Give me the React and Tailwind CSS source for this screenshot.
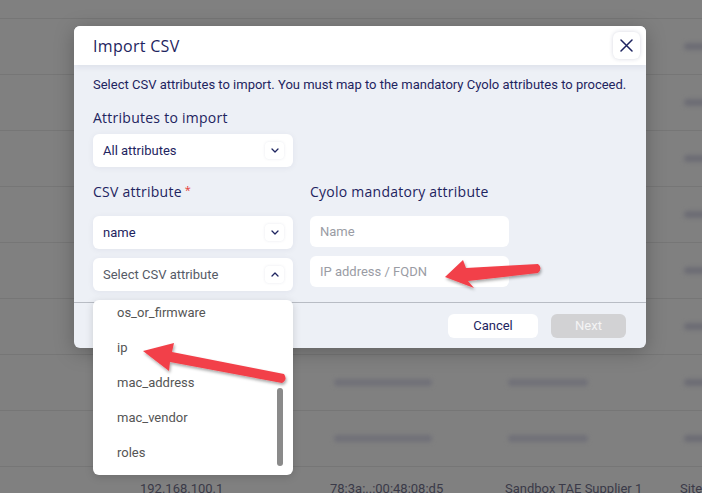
import React from 'react';

const label = { fontFamily: '"Open Sans", "Noto Sans", sans-serif' };
const roboto = { fontFamily: 'Roboto, "Noto Sans", sans-serif' };

function Chevron({ up }) {
  return (
    <span className="w-[19px] h-[17px] rounded bg-white shadow-[0_0_3px_rgba(30,40,90,0.10)] flex items-center justify-center">
      <svg width="8" height="5" viewBox="0 0 8 5" fill="none">
        <path d={up ? 'M1 4L4 1L7 4' : 'M1 1L4 4L7 1'} stroke="#1e2460" strokeWidth="1.3" strokeLinecap="round" strokeLinejoin="round" />
      </svg>
    </span>
  );
}

function Select({ value, placeholder, up }) {
  return (
    <div className="h-[33px] w-[200px] rounded-md bg-white shadow-[0_1px_6px_rgba(30,40,90,0.06)] flex items-center justify-between pl-[10px] pr-[9px]" style={roboto}>
      <span className={`text-[13px] ${value ? 'text-[#1e2460]' : 'text-[#555a66]'}`}>{value || placeholder}</span>
      <Chevron up={up} />
    </div>
  );
}

function Input({ placeholder }) {
  return (
    <div className="h-[31px] w-[199px] rounded-md bg-white flex items-center px-[10px]" style={roboto}>
      <span className="text-[13px] text-[#9a9ca4]">{placeholder}</span>
    </div>
  );
}

function Background() {
  const rows = Array.from({ length: 8 });
  return (
    <div className="absolute inset-0 bg-[#808080]">
      <div className="h-[19px] border-b border-[#767676]" />
      {rows.map((_, i) => (
        <div key={i} className="h-[56px] border-b border-[#767676] relative flex items-center">
          <div className="absolute left-[684px] w-[40px] h-[7px] rounded bg-[#6c6c74] blur-[2px]" />
          {i >= 6 && (
            <>
              <div className="absolute left-[334px] w-[98px] h-[7px] rounded bg-[#707078] blur-[2px]" />
              <div className="absolute left-[508px] w-[80px] h-[7px] rounded bg-[#707078] blur-[2px]" />
            </>
          )}
        </div>
      ))}
      <div className="relative h-[30px] text-[13px] text-[#3a3a48]" style={roboto}>
        <span className="absolute left-[140px] top-[12px]">192.168.100.1</span>
        <span className="absolute left-[330px] top-[12px]">78:3a:..:00:48:08:d5</span>
        <span className="absolute left-[505px] top-[12px]">Sandbox TAE Supplier 1</span>
        <span className="absolute left-[680px] top-[12px]">Site</span>
      </div>
    </div>
  );
}

export default function App() {
  return (
    <div className="w-[702px] h-[493px] relative overflow-hidden">
      <Background />

      {/* modal */}
      <div className="absolute left-[74px] top-[26px] w-[572px] h-[322px] rounded-md overflow-hidden bg-[#edf0f6] shadow-[0_4px_20px_rgba(0,0,0,0.25)] flex flex-col">
        <div className="h-[39px] bg-white flex items-center justify-between pl-[19px] pr-[6px] shadow-[0_2px_6px_rgba(30,40,90,0.08)] relative z-10">
          <span className="text-[16px] tracking-[0.3px] text-[#1e2460]" style={label}>Import CSV</span>
          <button className="w-[27px] h-[27px] rounded-md bg-white shadow-[0_0_4px_rgba(30,40,90,0.18)] flex items-center justify-center">
            <svg width="13" height="13" viewBox="0 0 13 13" fill="none">
              <path d="M1 1L12 12M12 1L1 12" stroke="#1e2460" strokeWidth="1.5" strokeLinecap="round" />
            </svg>
          </button>
        </div>

        <div className="px-[19px] pt-[12px] flex-1">
          <p className="text-[13px] leading-[16px] text-[#1e2460] whitespace-nowrap" style={roboto}>
            Select CSV attributes to import. You must map to the mandatory Cyolo attributes to proceed.
          </p>
          <div className="mt-[17px] text-[14px] leading-[16px] tracking-[0.25px] text-[#1e2460]" style={label}>Attributes to import</div>
          <div className="mt-[8px]">
            <Select value="All attributes" />
          </div>

          <div className="mt-[17px] flex gap-[17px]">
            <div className="w-[200px]">
              <div className="text-[14px] leading-[16px] tracking-[0.25px] text-[#1e2460] flex items-start" style={label}>
                CSV attribute<span className="text-[#e53935] text-[11px] ml-[3px] leading-[12px]">*</span>
              </div>
              <div className="mt-[16px] flex flex-col gap-[9px]">
                <Select value="name" />
                <Select placeholder="Select CSV attribute" up />
              </div>
            </div>
            <div className="w-[199px]">
              <div className="text-[14px] leading-[16px] tracking-[0.25px] text-[#1e2460]" style={label}>Cyolo mandatory attribute</div>
              <div className="mt-[16px] flex flex-col gap-[9px]">
                <Input placeholder="Name" />
                <Input placeholder="IP address / FQDN" />
              </div>
            </div>
          </div>
        </div>

        <div className="h-[46px] border-t border-[#b8bcc4] flex items-center justify-end gap-[13px] pr-[20px]" style={roboto}>
          <button className="w-[90px] h-[24px] rounded-md bg-white text-[13px] text-[#1e2460]">Cancel</button>
          <button className="w-[75px] h-[24px] rounded-md bg-[#d2d2d4] text-[13px] text-[#f4f4f4]">Next</button>
        </div>
      </div>

      {/* dropdown list */}
      <div className="absolute left-[93px] top-[300px] w-[200px] h-[175px] rounded-md overflow-hidden bg-white shadow-[0_2px_8px_rgba(0,0,0,0.15)] flex" style={roboto}>
        <ul className="flex-1 -mt-[5px]">
          {['os_or_firmware', 'ip', 'mac_address', 'mac_vendor', 'roles'].map((o) => (
            <li key={o} className="h-[35px] flex items-center pl-[24px] text-[13px] text-[#555]">{o}</li>
          ))}
        </ul>
        <div className="w-[6px] mr-[10px] mt-[88px] mb-[9px] rounded-full bg-[#8a8a8a]" />
      </div>

      {/* annotation arrows */}
      <svg className="absolute inset-0 pointer-events-none" width="702" height="493" viewBox="0 0 702 493">
        <defs>
          <filter id="sh" x="-20%" y="-50%" width="140%" height="200%">
            <feDropShadow dx="1" dy="2" stdDeviation="1.5" floodColor="#000" floodOpacity="0.35" />
          </filter>
        </defs>
        <g filter="url(#sh)" fill="#f2414a">
          <path d="M445 277 L463 260 L466 268 L538 264 Q543 268 538 273 L468 281 L474 288 Z" />
          <path d="M143 351 L174 343 L172 352 L284 374 Q288 380 282 383 L170 362 L169 371 Z" />
        </g>
      </svg>
    </div>
  );
}
